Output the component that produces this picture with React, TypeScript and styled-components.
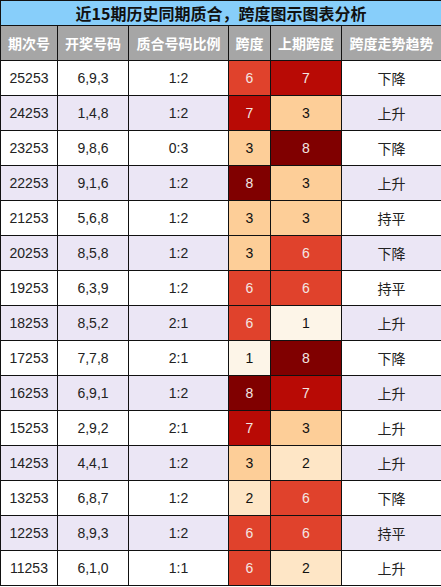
import React from 'react';
import styled, { createGlobalStyle } from 'styled-components';

const GlobalStyle = createGlobalStyle`
  html, body {
    margin: 0;
    padding: 0;
    background: #ffffff;
  }
  body {
    font-family: "Liberation Sans", "Noto Sans CJK SC", sans-serif;
  }
`;

const StyledTable = styled.table`
  width: 441px;
  border-collapse: collapse;
  table-layout: fixed;
  color: #222222;
  font-size: 14px;

  td,
  th {
    border: 1px solid #111111;
    text-align: center;
    padding: 0;
  }
`;

const StyledTitle = styled.th`
  height: 24px;
  background-color: #87cefa;
  color: #111111;
  font-size: 16px;
  font-weight: 700;
  font-family: "Noto Sans CJK SC", sans-serif;
  line-height: 22px;
`;

const StyledHead = styled.th`
  height: 34px;
  background-color: #a6a6a6;
  color: #ffffff;
  font-size: 14px;
  font-weight: 700;
  font-family: "Noto Sans CJK SC", sans-serif;
`;

const StyledRow = styled.tr<{ $alt: boolean }>`
  height: 35px;
  background-color: ${(p) => (p.$alt ? '#ebe6f5' : '#ffffff')};
`;

const StyledTrend = styled.td`
  font-family: "Noto Sans CJK SC", sans-serif;
  font-size: 14px;
`;

const spanColors: Record<number, [string, string]> = {
  1: ['#fdf5e8', '#111111'],
  2: ['#fee6c6', '#111111'],
  3: ['#fdce98', '#111111'],
  6: ['#e0422c', '#f3e6e3'],
  7: ['#b80a05', '#f3e6e3'],
  8: ['#800000', '#f3e6e3'],
};

const StyledSpan = styled.td<{ $value: number }>`
  background-color: ${(p) => spanColors[p.$value][0]};
  color: ${(p) => spanColors[p.$value][1]};
`;

type Draw = [string, string, string, number, number, string];

const draws: Draw[] = [
  ['25253', '6,9,3', '1:2', 6, 7, '下降'],
  ['24253', '1,4,8', '1:2', 7, 3, '上升'],
  ['23253', '9,8,6', '0:3', 3, 8, '下降'],
  ['22253', '9,1,6', '1:2', 8, 3, '上升'],
  ['21253', '5,6,8', '1:2', 3, 3, '持平'],
  ['20253', '8,5,8', '1:2', 3, 6, '下降'],
  ['19253', '6,3,9', '1:2', 6, 6, '持平'],
  ['18253', '8,5,2', '2:1', 6, 1, '上升'],
  ['17253', '7,7,8', '2:1', 1, 8, '下降'],
  ['16253', '6,9,1', '1:2', 8, 7, '上升'],
  ['15253', '2,9,2', '2:1', 7, 3, '上升'],
  ['14253', '4,4,1', '1:2', 3, 2, '上升'],
  ['13253', '6,8,7', '1:2', 2, 6, '下降'],
  ['12253', '8,9,3', '1:2', 6, 6, '持平'],
  ['11253', '6,1,0', '1:1', 6, 2, '上升'],
];

const headers = ['期次号', '开奖号码', '质合号码比例', '跨度', '上期跨度', '跨度走势趋势'];
const widths = [57, 71, 100, 42, 71, 100];

const App: React.FC = () => {
  return (
    <>
      <GlobalStyle />
      <StyledTable>
        <colgroup>
          {widths.map((w, i) => (
            <col key={i} style={{ width: w }} />
          ))}
        </colgroup>
        <thead>
          <tr>
            <StyledTitle colSpan={6}>近15期历史同期质合，跨度图示图表分析</StyledTitle>
          </tr>
          <tr>
            {headers.map((h) => (
              <StyledHead key={h}>{h}</StyledHead>
            ))}
          </tr>
        </thead>
        <tbody>
          {draws.map((d, i) => (
            <StyledRow key={d[0]} $alt={i % 2 === 1}>
              <td>{d[0]}</td>
              <td>{d[1]}</td>
              <td>{d[2]}</td>
              <StyledSpan $value={d[3]}>{d[3]}</StyledSpan>
              <StyledSpan $value={d[4]}>{d[4]}</StyledSpan>
              <StyledTrend>{d[5]}</StyledTrend>
            </StyledRow>
          ))}
        </tbody>
      </StyledTable>
    </>
  );
};

export default App;
